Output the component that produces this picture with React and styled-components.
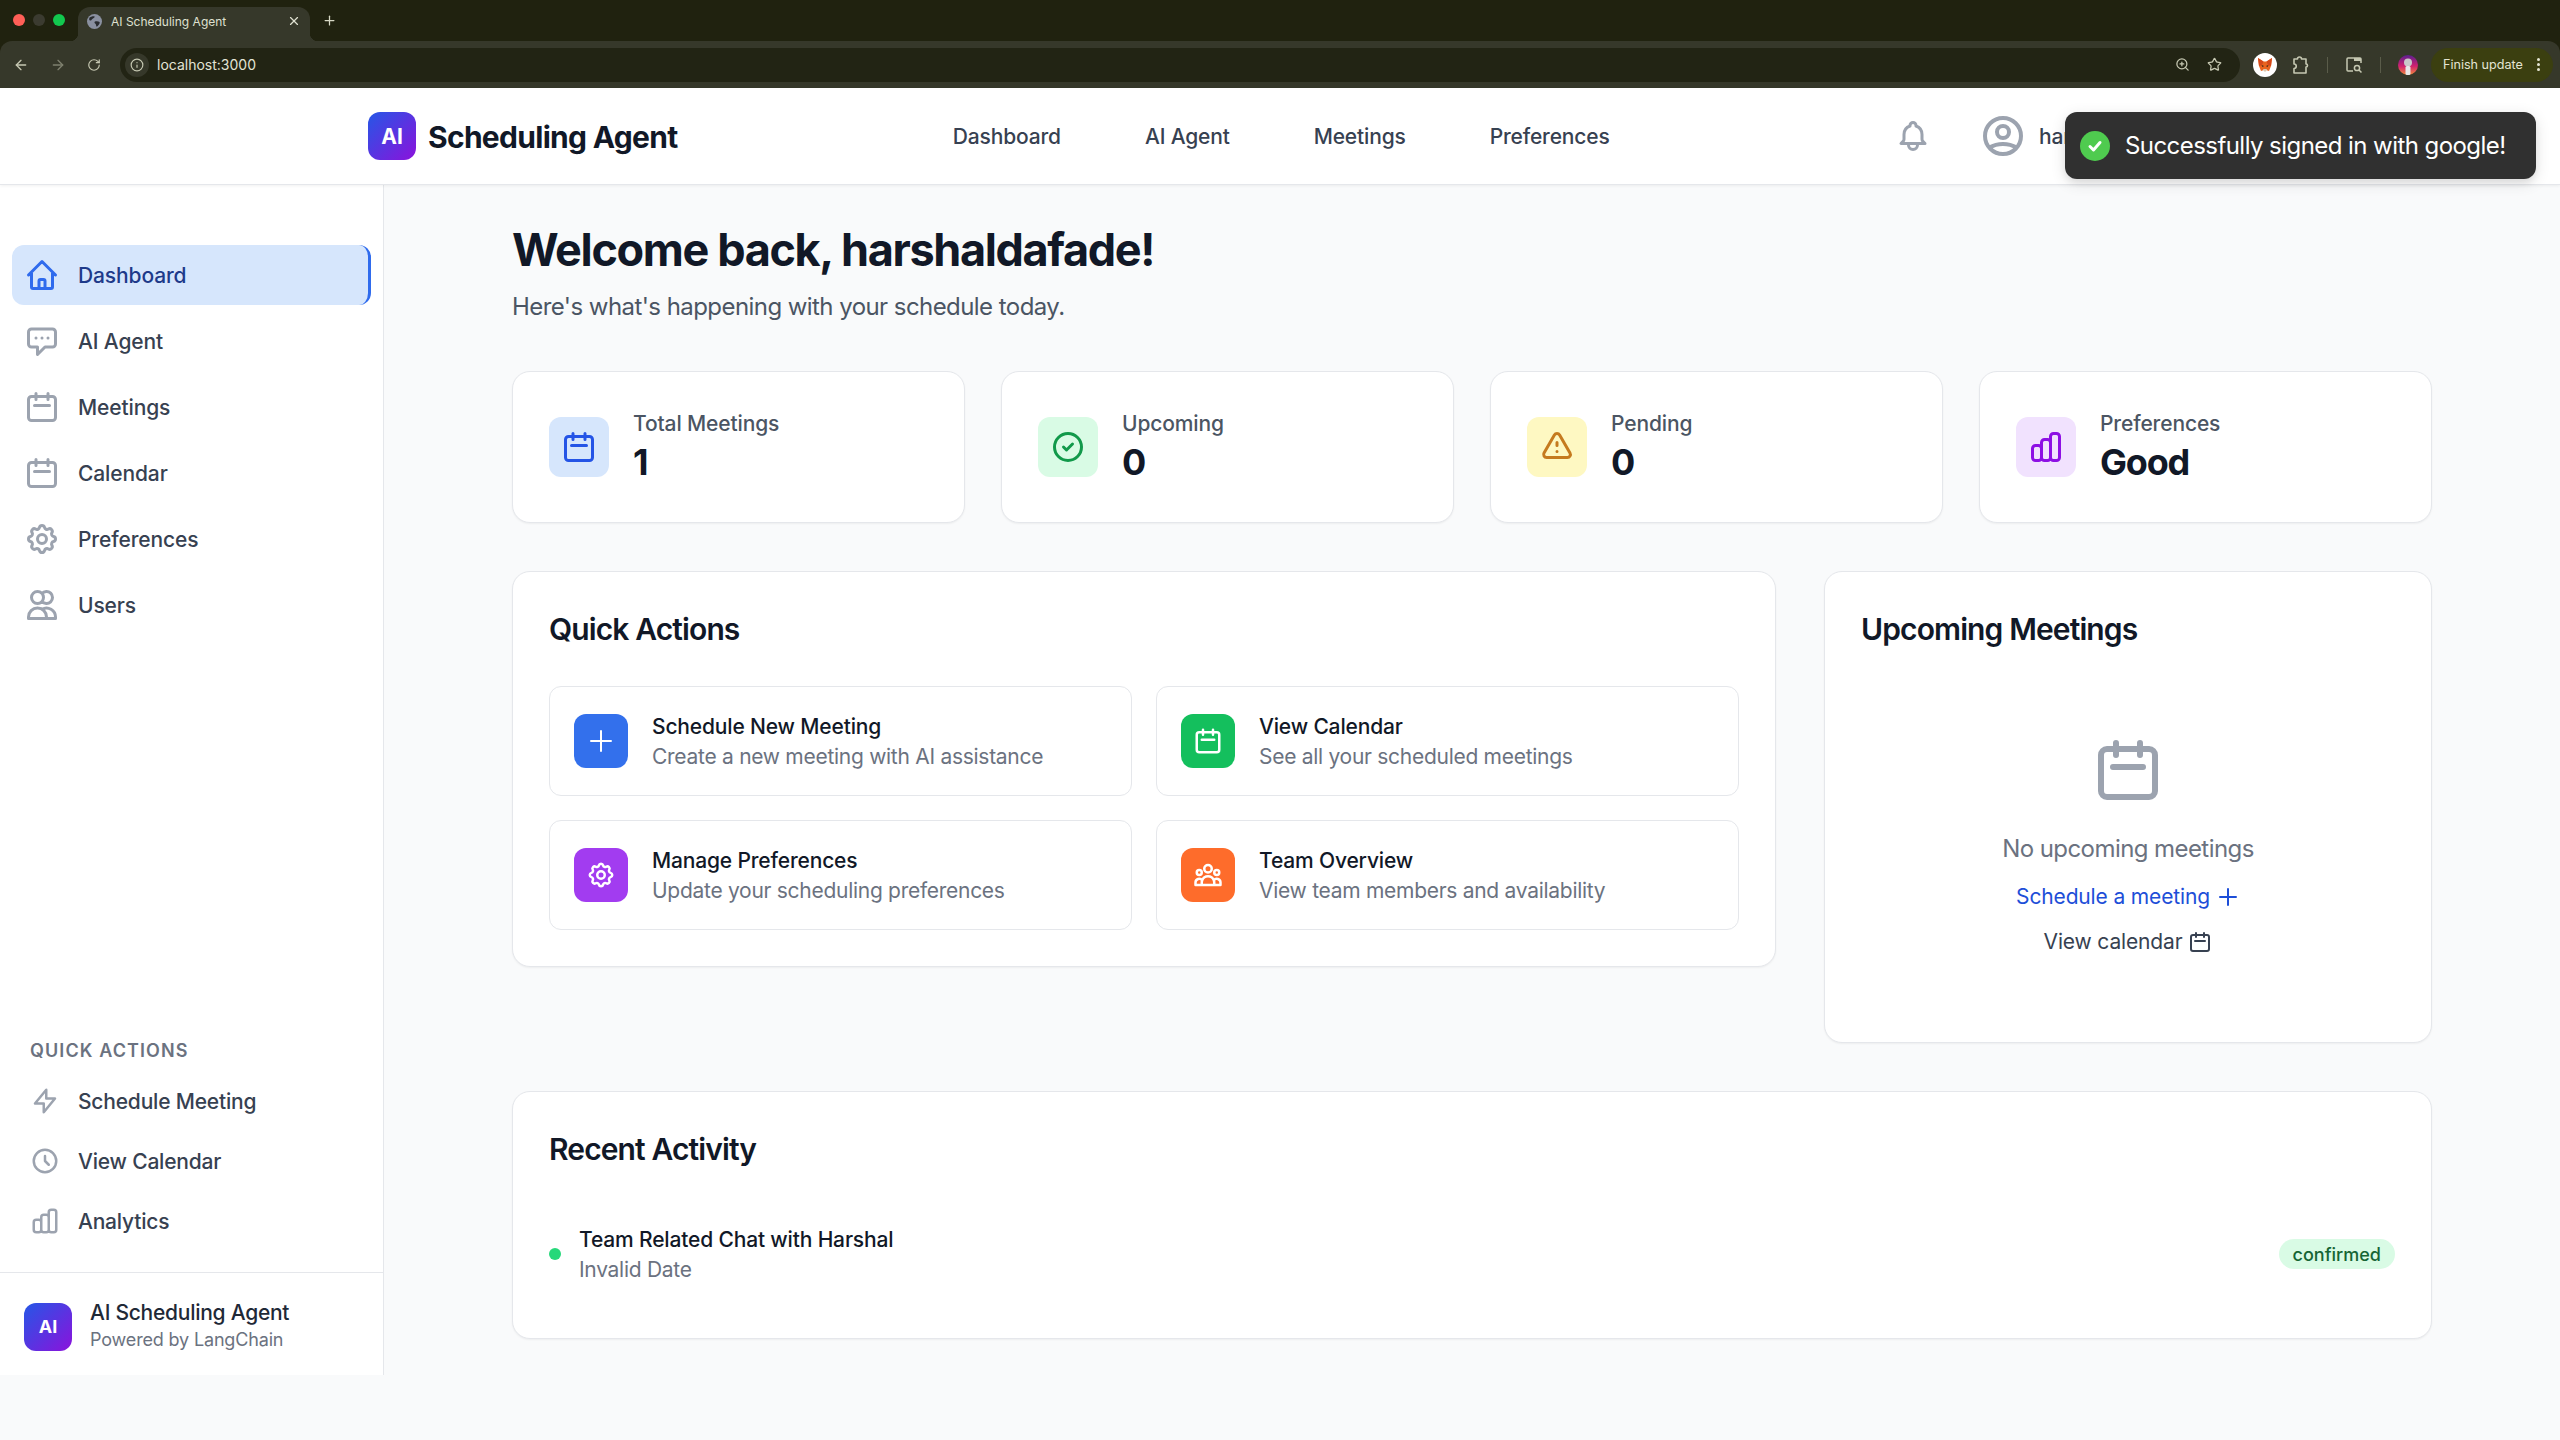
import React from "react";
import styled, { createGlobalStyle } from "styled-components";
import { ArrowLeft, ArrowRight, RotateCw, ZoomIn, Star, X, Plus, Info } from "lucide-react";

const GlobalStyle = createGlobalStyle`
  html, body {
    margin: 0;
    padding: 0;
    background: #f9fafb;
    font-family: Inter, "Noto Sans", sans-serif;
    color: #111827;
  }
  * { box-sizing: border-box; }
`;

const paths = {
  home: "M3 12l2-2m0 0l7-7 7 7M5 10v10a1 1 0 001 1h3m10-11l2 2m-2-2v10a1 1 0 01-1 1h-3m-6 0a1 1 0 001-1v-4a1 1 0 011-1h2a1 1 0 011 1v4a1 1 0 001 1m-6 0h6",
  chat: "M8 10h.01M12 10h.01M16 10h.01M9 16H5a2 2 0 01-2-2V6a2 2 0 012-2h14a2 2 0 012 2v8a2 2 0 01-2 2h-5l-5 5v-5z",
  calendar: "M8 7V3m8 4V3m-9 8h10M5 21h14a2 2 0 002-2V7a2 2 0 00-2-2H5a2 2 0 00-2 2v12a2 2 0 002 2z",
  cog: "M10.325 4.317c.426-1.756 2.924-1.756 3.35 0a1.724 1.724 0 002.573 1.066c1.543-.94 3.31.826 2.37 2.37a1.724 1.724 0 001.065 2.572c1.756.426 1.756 2.924 0 3.35a1.724 1.724 0 00-1.066 2.573c.94 1.543-.826 3.31-2.37 2.37a1.724 1.724 0 00-2.572 1.065c-.426 1.756-2.924 1.756-3.35 0a1.724 1.724 0 00-2.573-1.066c-1.543.94-3.31-.826-2.37-2.37a1.724 1.724 0 00-1.065-2.572c-1.756-.426-1.756-2.924 0-3.35a1.724 1.724 0 001.066-2.573c-.94-1.543.826-3.31 2.37-2.37.996.608 2.296.07 2.572-1.065zM15 12a3 3 0 11-6 0 3 3 0 016 0z",
  users: "M12 4.354a4 4 0 110 5.292M15 21H3v-1a6 6 0 0112 0v1zm0 0h6v-1a6 6 0 00-9-5.197M13 7a4 4 0 11-8 0 4 4 0 018 0z",
  bolt: "M13 10V3L4 14h7v7l9-11h-7z",
  clock: "M12 8v4l3 3m6-3a9 9 0 11-18 0 9 9 0 0118 0z",
  chart: "M9 19v-6a2 2 0 00-2-2H5a2 2 0 00-2 2v6a2 2 0 002 2h2a2 2 0 002-2zm0 0V9a2 2 0 012-2h2a2 2 0 012 2v10m-6 0a2 2 0 002 2h2a2 2 0 002-2m0 0V5a2 2 0 012-2h2a2 2 0 012 2v14a2 2 0 01-2 2h-2a2 2 0 01-2-2z",
  check: "M9 12l2 2 4-4m6 2a9 9 0 11-18 0 9 9 0 0118 0z",
  warning: "M12 9v2m0 4h.01m-6.938 4h13.856c1.54 0 2.502-1.667 1.732-3L13.732 4c-.77-1.333-2.694-1.333-3.464 0L3.34 16c-.77 1.333.192 3 1.732 3z",
  plus: "M12 4v16m8-8H4",
  userCircle: "M5.121 17.804A13.937 13.937 0 0112 16c2.5 0 4.847.655 6.879 1.804M15 10a3 3 0 11-6 0 3 3 0 016 0zm6 2a9 9 0 11-18 0 9 9 0 0118 0z",
  bell: "M15 17h5l-1.405-1.405A2.032 2.032 0 0118 14.158V11a6.002 6.002 0 00-4-5.659V5a2 2 0 10-4 0v.341C7.67 6.165 6 8.388 6 11v3.159c0 .538-.214 1.055-.595 1.436L4 17h5m6 0v1a3 3 0 11-6 0v-1m6 0H9",
  team: "M17 20h5v-2a3 3 0 00-5.356-1.857M17 20H7m10 0v-2c0-.656-.126-1.283-.356-1.857M7 20H2v-2a3 3 0 015.356-1.857M7 20v-2c0-.656.126-1.283.356-1.857m0 0a5.002 5.002 0 019.288 0M15 7a3 3 0 11-6 0 3 3 0 016 0zm6 3a2 2 0 11-4 0 2 2 0 014 0zM7 10a2 2 0 11-4 0 2 2 0 014 0z",
};

const Svg = styled.svg`
  width: ${(p) => p.$size}px;
  height: ${(p) => p.$size}px;
  flex-shrink: 0;
  color: ${(p) => p.$color || "currentColor"};
`;

const Icon = ({ name, size = 36, color, stroke = 2 }) => (
  <Svg $size={size} $color={color} viewBox="0 0 24 24" fill="none" stroke="currentColor" strokeWidth={stroke} strokeLinecap="round" strokeLinejoin="round">
    <path d={paths[name]} />
  </Svg>
);

/* browser window */
const BrowserBar = styled.div`
  height: 88px;
  background: #20220f;
  display: flex;
  flex-direction: column;
`;

const TabStrip = styled.div`
  height: 41px;
  display: flex;
  align-items: flex-end;
  padding-left: 13px;
`;

const Dot = styled.span`
  width: 12px;
  height: 12px;
  border-radius: 50%;
  background: ${(p) => p.$color};
  margin: 0 8px 15px 0;
`;

const Tab = styled.div`
  position: relative;
  width: 232px;
  height: 34px;
  margin-left: 5px;
  background: #36382a;
  border-radius: 12px 12px 0 0;
  display: flex;
  align-items: center;
  padding: 0 9px 6px 9px;
  font-size: 12px;
  color: #dfe0d0;
  gap: 9px;

  &::before,
  &::after {
    content: "";
    position: absolute;
    bottom: 0;
    width: 8px;
    height: 8px;
  }
  &::before {
    left: -8px;
    background: radial-gradient(circle at 0 0, #20220f 8px, #36382a 8.5px);
  }
  &::after {
    right: -8px;
    background: radial-gradient(circle at 100% 0, #20220f 8px, #36382a 8.5px);
  }
`;

const TabTitle = styled.span`
  flex: 1;
  white-space: nowrap;
`;

const NewTab = styled.span`
  display: flex;
  margin: 0 0 13px 12px;
  color: #d6d8c4;
`;

const Toolbar = styled.div`
  height: 47px;
  background: #36382a;
  border-radius: 12px 12px 0 0;
  display: flex;
  align-items: center;
  padding: 0 7px 0 13px;
  color: #c6c8b2;
`;

const ToolIcon = styled.span`
  display: flex;
  width: ${(p) => p.$width || 37}px;
  opacity: ${(p) => (p.$dim ? 0.5 : 1)};
`;

const Omnibox = styled.div`
  flex: 1;
  height: 34px;
  background: #222414;
  border-radius: 17px;
  display: flex;
  align-items: center;
  padding: 0 18px 0 5px;
  gap: 8px;
  font-size: 14px;
  color: #e2e3d4;
`;

const InfoPill = styled.span`
  width: 24px;
  height: 24px;
  border-radius: 50%;
  background: #36382a;
  display: flex;
  align-items: center;
  justify-content: center;
`;

const UrlText = styled.span`
  flex: 1;
`;

const OmniIcons = styled.span`
  display: flex;
  align-items: center;
  gap: 17px;
  color: #c6c8b2;
`;

const ToolRight = styled.div`
  display: flex;
  align-items: center;
  gap: 15px;
  margin-left: 13px;
`;

const ToolGroup = styled.span`
  display: flex;
  align-items: center;
  gap: 17px;
`;

const ToolSep = styled.span`
  width: 1px;
  height: 16px;
  background: #5a5c4a;
`;

const Finish = styled.div`
  width: 122px;
  height: 34px;
  margin-left: 13px;
  border-radius: 17px;
  background: #3b3f10;
  display: flex;
  align-items: center;
  padding: 0 13px 0 12px;
  justify-content: space-between;
  font-size: 12.6px;
  color: #e4e5d3;
  white-space: nowrap;
`;

const Kebab = styled.span`
  display: flex;
  flex-direction: column;
  gap: 2px;

  i {
    width: 3px;
    height: 3px;
    border-radius: 50%;
    background: #e4e5d3;
  }
`;

const Favicon = () => (
  <svg width="15" height="15" viewBox="0 0 16 16">
    <circle cx="8" cy="8" r="8" fill="#8a90a0" />
    <path d="M3 3.5c2-1 4-1.5 5-1 .5 1.500-1 2-2 2.500s-1 2-2.500 2S2 5 3 3.500zM8.500 8c1.500-.5 3.500-.5 5 .5.5 1.500-1.500 4-3 5-1 0-.5-2-1.500-3s-1.500-2-.5-2.500z" fill="#2a2c30" />
  </svg>
);

const FoxBadge = () => (
  <svg width="24" height="24" viewBox="0 0 24 24">
    <circle cx="12" cy="12" r="12" fill="#fff" />
    <polygon points="5,5 10.500,8.500 13.500,8.500 19,5 18,13 16,18 13,17 11,17 8,18 6,13" fill="#e8641f" />
    <polygon points="5,5 10.500,8.500 9,12 6,13" fill="#d4481a" />
    <polygon points="19,5 13.500,8.500 15,12 18,13" fill="#d4481a" />
    <polygon points="8.500,12 11,13 9.500,14" fill="#33241a" />
    <polygon points="15.500,12 13,13 14.500,14" fill="#33241a" />
    <polygon points="10,16 14,16 13,18.500 11,18.500" fill="#d8c8b0" />
  </svg>
);

const PuzzleIcon = () => (
  <svg width="18" height="20" viewBox="0 0 18 20" fill="none" stroke="#c6c8b2" strokeWidth="1.6" strokeLinejoin="round">
    <path d="M2 4h3.500a2 2 0 014 0H14v5a1.500 1.500 0 010 3v6H2v-4.500a2.200 2.200 0 000-4.500z" />
  </svg>
);

const ProfileBadge = () => (
  <svg width="20" height="20" viewBox="0 0 20 20">
    <defs>
      <linearGradient id="profile" x1="0" y1="0" x2="0" y2="1">
        <stop offset="0" stopColor="#5a1f8f" />
        <stop offset="0.55" stopColor="#d0206f" />
        <stop offset="1" stopColor="#f08a3a" />
      </linearGradient>
    </defs>
    <circle cx="10" cy="10" r="10" fill="url(#profile)" />
    <circle cx="10" cy="7.500" r="4" fill="#c9c9c9" />
    <rect x="7.500" y="11" width="5" height="9" rx="1.500" fill="#e8e8e8" />
  </svg>
);

const MediaIcon = () => (
  <svg width="18" height="18" viewBox="0 0 18 18" fill="none" stroke="#c6c8b2" strokeWidth="1.5">
    <path d="M8 15H3a1 1 0 01-1-1V3a1 1 0 011-1h12a1 1 0 011 1v4" />
    <path d="M9 3.500h7" strokeWidth="3" />
    <circle cx="12" cy="12" r="2.600" />
    <path d="M14 14l2.500 2.500" />
  </svg>
);

/* app header */
const Header = styled.header`
  height: 97px;
  background: #fff;
  border-bottom: 1px solid #e5e7eb;
  box-shadow: 0 1px 3px rgba(0, 0, 0, 0.06);
  position: relative;
  z-index: 2;
`;

const HeaderInner = styled.div`
  width: 1920px;
  height: 96px;
  margin: 0 auto;
  padding: 0 48px;
  display: flex;
  align-items: center;
  justify-content: space-between;
`;

const Brand = styled.div`
  display: flex;
  align-items: center;
  gap: 12px;
  font-size: 30px;
  font-weight: 700;
  letter-spacing: -0.7px;
  color: #111827;
`;

const BrandName = styled.span`
  padding-top: 1px;
`;

const LogoMark = styled.div`
  width: 48px;
  height: 48px;
  border-radius: 12px;
  background: linear-gradient(135deg, #2557e6, #8b12dc);
  color: #fff;
  font-size: ${(p) => p.$font || 21}px;
  letter-spacing: 0;
  font-weight: 700;
  display: flex;
  align-items: center;
  justify-content: center;
  flex-shrink: 0;
`;

const TopNav = styled.nav`
  display: flex;
  gap: 48px;
  padding-left: 2px;
`;

const TopLink = styled.a`
  padding: 13px 18px 11px;
  font-size: 21px;
  line-height: 30px;
  font-weight: 500;
  letter-spacing: -0.16px;
  color: #374151;
`;

const HeaderRight = styled.div`
  display: flex;
  align-items: center;
  gap: 24px;
`;

const BellButton = styled.div`
  padding: 12px;
  display: flex;
  color: #9ca3af;
`;

const UserButton = styled.div`
  display: flex;
  align-items: center;
  gap: 12px;
  padding: 12px;
  font-size: 21px;
  font-weight: 500;
  letter-spacing: -0.2px;
  color: #374151;
  white-space: nowrap;
`;

const Toast = styled.div`
  position: absolute;
  top: 112px;
  right: 24px;
  z-index: 5;
  width: 471px;
  height: 67px;
  padding: 0 15px;
  border-radius: 12px;
  background: #303030;
  color: #fff;
  box-shadow: 0 4px 15px rgba(0, 0, 0, 0.12), 0 4px 6px rgba(0, 0, 0, 0.06);
  display: flex;
  align-items: center;
  gap: 15px;
  font-size: 24px;
  letter-spacing: -0.56px;
  white-space: nowrap;
`;

const ToastCheck = styled.span`
  width: 30px;
  height: 30px;
  border-radius: 50%;
  background: #4fcb4f;
  display: flex;
  align-items: center;
  justify-content: center;
  flex-shrink: 0;
`;

/* layout */
const Shell = styled.div`
  display: flex;
`;

const Sidebar = styled.aside`
  width: 384px;
  flex-shrink: 0;
  background: #fff;
  border-right: 1px solid #e5e7eb;
  display: flex;
  flex-direction: column;
`;

const SideNav = styled.nav`
  flex: 1;
  padding: 60px 12px 0;
  display: flex;
  flex-direction: column;
  gap: 6px;
`;

const SideLink = styled.a`
  height: 60px;
  padding: 0 12px;
  display: flex;
  align-items: center;
  gap: 18px;
  font-size: 21px;
  font-weight: 500;
  letter-spacing: -0.12px;
  border-radius: 12px;
  color: ${(p) => (p.$active ? "#1e3a8a" : "#374151")};
  background: ${(p) => (p.$active ? "#d6e6fc" : "transparent")};
  border-right: ${(p) => (p.$active ? "3px solid #2f6bed" : "0")};
`;

const SideQuick = styled.div`
  padding: 0 12px 24px;
  display: flex;
  flex-direction: column;
`;

const SideLabel = styled.h3`
  margin: 0 0 11px;
  padding-left: 18px;
  font-size: 18px;
  line-height: 24px;
  font-weight: 600;
  letter-spacing: 1.1px;
  text-transform: uppercase;
  color: #6b7280;
`;

const QuickLink = styled.a`
  height: 54px;
  margin-bottom: 6px;
  padding: 0 18px;
  display: flex;
  align-items: center;
  gap: 18px;
  font-size: 21px;
  font-weight: 500;
  letter-spacing: -0.2px;
  color: #374151;

  &:last-child {
    margin-bottom: 0;
  }
`;

const SideFooter = styled.div`
  border-top: 1px solid #e5e7eb;
  padding: 28px 24px 23px;
  display: flex;
  align-items: center;
  gap: 18px;
`;

const FooterName = styled.div`
  font-size: 21px;
  line-height: 30px;
  font-weight: 500;
  letter-spacing: -0.26px;
  color: #1f2937;
  margin-top: -3px;
`;

const FooterSub = styled.div`
  font-size: 18px;
  line-height: 24px;
  letter-spacing: -0.16px;
  color: #6b7280;
`;

const Main = styled.main`
  flex: 1;
  padding: 38px 0 36px;
`;

const Content = styled.div`
  width: 1920px;
  margin: 0 auto;
`;

const Title = styled.h1`
  margin: 0 0 12px;
  font-size: 45px;
  line-height: 54px;
  font-weight: 700;
  letter-spacing: -1.35px;
  color: #111827;
`;

const Subtitle = styled.p`
  margin: 0 0 46px;
  font-size: 24px;
  line-height: 36px;
  letter-spacing: -0.56px;
  color: #4b5563;
`;

const StatGrid = styled.div`
  display: grid;
  grid-template-columns: repeat(4, 1fr);
  gap: 36px;
  margin-bottom: 48px;
`;

const Card = styled.section`
  background: #fff;
  border: 1px solid #e5e7eb;
  border-radius: 18px;
  padding: 36px;
  box-shadow: 0 1px 2px rgba(0, 0, 0, 0.05);
`;

const StatCard = styled(Card)`
  display: flex;
  align-items: center;
  gap: 24px;
`;

const StatIcon = styled.div`
  width: 60px;
  height: 60px;
  border-radius: 12px;
  background: ${(p) => p.$bg};
  display: flex;
  align-items: center;
  justify-content: center;
`;

const StatLabel = styled.div`
  padding-top: 1px;
  font-size: 21px;
  line-height: 30px;
  font-weight: 500;
  letter-spacing: -0.13px;
  color: #4b5563;
`;

const StatValue = styled.div`
  font-size: 36px;
  line-height: 47px;
  font-weight: 700;
  letter-spacing: -1.2px;
  color: #111827;
`;

const MiddleGrid = styled.div`
  display: grid;
  grid-template-columns: repeat(3, 1fr);
  gap: 48px;
  align-items: start;
  margin-bottom: 48px;
`;

const WideCard = styled(Card)`
  grid-column: span 2;
`;

const CardTitle = styled.h2`
  margin: 0 0 36px;
  font-size: 30px;
  line-height: 42px;
  font-weight: 600;
  letter-spacing: -0.88px;
  color: #111827;
`;

const ActionGrid = styled.div`
  display: grid;
  grid-template-columns: 1fr 1fr;
  gap: 24px;
`;

const ActionCard = styled.a`
  border: 1px solid #e5e7eb;
  border-radius: 12px;
  padding: 24px;
  display: flex;
  align-items: center;
  gap: 24px;
`;

const ActionIcon = styled.div`
  width: 54px;
  height: 54px;
  border-radius: 12px;
  background: ${(p) => p.$bg};
  display: flex;
  align-items: center;
  justify-content: center;
  color: #fff;
`;

const TextStack = styled.div`
  padding-top: 1px;
  height: 60px;
  flex: 1;
`;

const ActionName = styled.div`
  font-size: 21px;
  line-height: 30px;
  font-weight: 500;
  letter-spacing: -0.16px;
  color: #111827;
`;

const ActionHint = styled.div`
  font-size: 21px;
  line-height: 30px;
  letter-spacing: -0.28px;
  color: #6b7280;
`;

const Empty = styled.div`
  padding: 48px 0 49px;
  display: flex;
  flex-direction: column;
  align-items: center;
`;

const EmptyText = styled.p`
  margin: 25px 0 15px;
  font-size: 24px;
  line-height: 36px;
  letter-spacing: -0.57px;
  color: #6b7280;
`;

const EmptyLink = styled.a`
  display: flex;
  align-items: center;
  gap: 6px;
  font-size: 21px;
  line-height: 30px;
  font-weight: 400;
  letter-spacing: -0.15px;
  color: ${(p) => p.$color};
  margin-bottom: ${(p) => p.$gap || 0}px;
`;

const ActivityRow = styled.div`
  padding: 18px 0;
  display: flex;
  align-items: center;
`;

const StatusDot = styled.span`
  width: 12px;
  height: 12px;
  border-radius: 50%;
  background: #26d87a;
  margin-right: 18px;
`;

const Badge = styled.span`
  height: 30px;
  padding: 0 14px;
  border-radius: 15px;
  background: #d9fbe5;
  color: #166534;
  font-size: 18px;
  font-weight: 500;
  display: flex;
  align-items: center;
`;

const sideItems = [
  { label: "Dashboard", icon: "home", active: true },
  { label: "AI Agent", icon: "chat" },
  { label: "Meetings", icon: "calendar" },
  { label: "Calendar", icon: "calendar" },
  { label: "Preferences", icon: "cog" },
  { label: "Users", icon: "users" },
];

const quickItems = [
  { label: "Schedule Meeting", icon: "bolt" },
  { label: "View Calendar", icon: "clock" },
  { label: "Analytics", icon: "chart" },
];

const stats = [
  { label: "Total Meetings", value: "1", icon: "calendar", bg: "#d6e6fc", color: "#2454e6" },
  { label: "Upcoming", value: "0", icon: "check", bg: "#d9fbe5", color: "#11994a" },
  { label: "Pending", value: "0", icon: "warning", bg: "#fef8c2", color: "#c57a1e" },
  { label: "Preferences", value: "Good", icon: "chart", bg: "#f1e2fe", color: "#8d10e4" },
];

const actions = [
  { name: "Schedule New Meeting", hint: "Create a new meeting with AI assistance", icon: "plus", bg: "#3370ec", stroke: 1.6 },
  { name: "View Calendar", hint: "See all your scheduled meetings", icon: "calendar", bg: "#14bf5d" },
  { name: "Manage Preferences", hint: "Update your scheduling preferences", icon: "cog", bg: "#a23cf0" },
  { name: "Team Overview", hint: "View team members and availability", icon: "team", bg: "#fe6c2b" },
];

const App = () => {
  return (
    <>
      <GlobalStyle />
      <BrowserBar>
        <TabStrip>
          <Dot $color="#ff5f57" />
          <Dot $color="#3b3b30" />
          <Dot $color="#12c84f" />
          <Tab>
            <Favicon />
            <TabTitle>AI Scheduling Agent</TabTitle>
            <X size={14} />
          </Tab>
          <NewTab>
            <Plus size={15} />
          </NewTab>
        </TabStrip>
        <Toolbar>
          <ToolIcon><ArrowLeft size={16} /></ToolIcon>
          <ToolIcon $dim><ArrowRight size={16} /></ToolIcon>
          <ToolIcon $width={33}><RotateCw size={14} /></ToolIcon>
          <Omnibox>
            <InfoPill><Info size={14} color="#c6c8b2" /></InfoPill>
            <UrlText>localhost:3000</UrlText>
            <OmniIcons>
              <ZoomIn size={15} />
              <Star size={15} />
            </OmniIcons>
          </Omnibox>
          <ToolRight>
            <FoxBadge />
            <ToolGroup>
              <PuzzleIcon />
              <ToolSep />
              <MediaIcon />
              <ToolSep />
              <ProfileBadge />
            </ToolGroup>
          </ToolRight>
          <Finish>
            Finish update
            <Kebab><i /><i /><i /></Kebab>
          </Finish>
        </Toolbar>
      </BrowserBar>

      <Header>
        <HeaderInner>
          <Brand>
            <LogoMark>AI</LogoMark>
            <BrandName>Scheduling Agent</BrandName>
          </Brand>
          <TopNav>
            <TopLink>Dashboard</TopLink>
            <TopLink>AI Agent</TopLink>
            <TopLink>Meetings</TopLink>
            <TopLink>Preferences</TopLink>
          </TopNav>
          <HeaderRight>
            <BellButton><Icon name="bell" /></BellButton>
            <UserButton>
              <Icon name="userCircle" size={48} color="#9ca3af" />
              harshaldafade
            </UserButton>
          </HeaderRight>
        </HeaderInner>
      </Header>

      <Toast>
        <ToastCheck>
          <svg width="18" height="18" viewBox="0 0 18 18" fill="none" stroke="#fff" strokeWidth="3" strokeLinecap="round" strokeLinejoin="round">
            <path d="M4 9.500l3.500 3.500L14 5.500" />
          </svg>
        </ToastCheck>
        Successfully signed in with google!
      </Toast>

      <Shell>
        <Sidebar>
          <SideNav>
            {sideItems.map((item) => (
              <SideLink key={item.label} $active={item.active}>
                <Icon name={item.icon} color={item.active ? "#2f6bed" : "#9ca3af"} />
                {item.label}
              </SideLink>
            ))}
          </SideNav>
          <SideQuick>
            <SideLabel>Quick Actions</SideLabel>
            {quickItems.map((item) => (
              <QuickLink key={item.label}>
                <Icon name={item.icon} size={30} color="#9ca3af" />
                {item.label}
              </QuickLink>
            ))}
          </SideQuick>
          <SideFooter>
            <LogoMark $font={18}>AI</LogoMark>
            <div>
              <FooterName>AI Scheduling Agent</FooterName>
              <FooterSub>Powered by LangChain</FooterSub>
            </div>
          </SideFooter>
        </Sidebar>

        <Main>
          <Content>
            <Title>Welcome back, harshaldafade!</Title>
            <Subtitle>Here's what's happening with your schedule today.</Subtitle>

            <StatGrid>
              {stats.map((stat) => (
                <StatCard key={stat.label}>
                  <StatIcon $bg={stat.bg}>
                    <Icon name={stat.icon} color={stat.color} />
                  </StatIcon>
                  <div>
                    <StatLabel>{stat.label}</StatLabel>
                    <StatValue>{stat.value}</StatValue>
                  </div>
                </StatCard>
              ))}
            </StatGrid>

            <MiddleGrid>
              <WideCard>
                <CardTitle>Quick Actions</CardTitle>
                <ActionGrid>
                  {actions.map((action) => (
                    <ActionCard key={action.name}>
                      <ActionIcon $bg={action.bg}>
                        <Icon name={action.icon} size={30} stroke={action.stroke} />
                      </ActionIcon>
                      <TextStack>
                        <ActionName>{action.name}</ActionName>
                        <ActionHint>{action.hint}</ActionHint>
                      </TextStack>
                    </ActionCard>
                  ))}
                </ActionGrid>
              </WideCard>

              <Card>
                <CardTitle>Upcoming Meetings</CardTitle>
                <Empty>
                  <Icon name="calendar" size={72} color="#9ca3af" />
                  <EmptyText>No upcoming meetings</EmptyText>
                  <EmptyLink $color="#1d4ed8" $gap={15}>
                    Schedule a meeting
                    <Icon name="plus" size={24} />
                  </EmptyLink>
                  <EmptyLink $color="#374151">
                    View calendar
                    <Icon name="calendar" size={24} />
                  </EmptyLink>
                </Empty>
              </Card>
            </MiddleGrid>

            <Card>
              <CardTitle>Recent Activity</CardTitle>
              <ActivityRow>
                <StatusDot />
                <TextStack>
                  <ActionName>Team Related Chat with Harshal</ActionName>
                  <ActionHint>Invalid Date</ActionHint>
                </TextStack>
                <Badge>confirmed</Badge>
              </ActivityRow>
            </Card>
          </Content>
        </Main>
      </Shell>
    </>
  );
};

export default App;
